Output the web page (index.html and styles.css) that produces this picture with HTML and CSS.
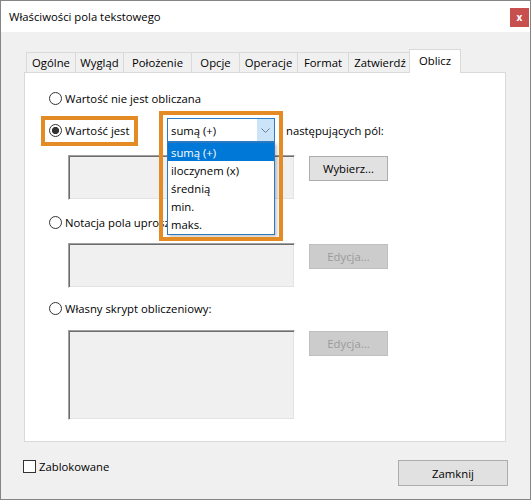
FILE: index.html
```html
<!DOCTYPE html>
<html lang="pl">
<head>
<meta charset="utf-8">
<title>Właściwości pola tekstowego</title>
<link rel="stylesheet" href="styles.css">
</head>
<body>
<div class="window">
  <div class="titlebar">
    <span class="title">Właściwości pola tekstowego</span>
    <span class="close">x</span>
  </div>
  <div class="client">
    <div class="tabs">
      <div class="tab t1">Ogólne</div>
      <div class="tab t2">Wygląd</div>
      <div class="tab t3">Położenie</div>
      <div class="tab t4">Opcje</div>
      <div class="tab t5">Operacje</div>
      <div class="tab t6">Format</div>
      <div class="tab t7">Zatwierdź</div>
      <div class="tab active">Oblicz</div>
    </div>
    <div class="panel">
      <div class="radio-row">
        <span class="radio"></span><span class="label">Wartość nie jest obliczana</span>
      </div>
      <div class="calc-row">
        <div class="calc-label"><span class="radio checked"></span><span class="label">Wartość jest</span></div>
        <div class="combo">
          <span class="combo-text">sumą (+)</span>
          <span class="combo-arrow"><svg width="9" height="5" viewBox="0 0 9 5"><polyline points="0.5,0.5 4.5,4.5 8.5,0.5" fill="none" stroke="#6a7f93" stroke-width="1"/></svg></span>
          <ul class="dropdown">
            <li class="selected">sumą (+)</li>
            <li>iloczynem (x)</li>
            <li>średnią</li>
            <li>min.</li>
            <li>maks.</li>
          </ul>
        </div>
        <span class="fields-label">następujących pól:</span>
      </div>
      <div class="field-row">
        <div class="textbox"></div>
        <div class="btn">Wybierz...</div>
      </div>
      <div class="radio-row gap-top">
        <span class="radio"></span><span class="label">Notacja pola uproszczonego</span>
      </div>
      <div class="field-row small-gap">
        <div class="textbox"></div>
        <div class="btn disabled">Edycja...</div>
      </div>
      <div class="radio-row mid-gap">
        <span class="radio"></span><span class="label">Własny skrypt obliczeniowy:</span>
      </div>
      <div class="field-row">
        <div class="textbox tall"></div>
        <div class="btn disabled">Edycja...</div>
      </div>
    </div>
    <div class="footer">
      <div class="check-row"><span class="checkbox"></span><span class="label">Zablokowane</span></div>
      <div class="btn wide">Zamknij</div>
    </div>
  </div>
  <div class="highlight hl-radio"></div>
  <div class="highlight hl-combo"></div>
</div>
</body>
</html>
```

FILE: styles.css
```css
* { box-sizing: border-box; }

html, body {
  margin: 0;
  padding: 0;
  background: #ffffff;
}

body {
  font-family: "Open Sans", "Noto Sans", sans-serif;
  font-size: 11.3px;
  color: #000;
}

.window {
  position: relative;
  width: 531px;
  height: 500px;
  border: 1px solid #858585;
  display: flex;
  flex-direction: column;
  background: #f0f0f0;
}

.titlebar {
  height: 31px;
  background: #ffffff;
  display: flex;
  align-items: center;
  padding-left: 8px;
}

.title {
  white-space: nowrap;
}

.close {
  margin-left: auto;
  margin-right: 1px;
  align-self: flex-start;
  margin-top: 7px;
  width: 19px;
  height: 19px;
  background: #c7504f;
  color: #fff;
  font-weight: bold;
  font-size: 10px;
  display: flex;
  align-items: center;
  justify-content: center;
  line-height: 1;
  padding-bottom: 2px;
}

.client {
  flex: 1;
  padding-top: 17px;
  display: flex;
  flex-direction: column;
}

.tabs {
  display: flex;
  align-items: flex-end;
  height: 23px;
  padding-left: 25px;
}

.tab {
  height: 20px;
  border: 1px solid #d9d9d9;
  border-bottom: none;
  background: #f0f0f0;
  display: flex;
  align-items: center;
  justify-content: center;
  white-space: nowrap;
  margin-left: -1px;
  padding-bottom: 1px;
}

.t1 { width: 50px; margin-left: 0; }
.t2 { width: 49px; }
.t3 { width: 69px; }
.t4 { width: 49px; }
.t5 { width: 59px; }
.t6 { width: 52px; }
.t7 { width: 64px; }

.tab.active {
  width: 52px;
  height: 24px;
  margin-left: -3px;
  margin-bottom: -1px;
  background: #ffffff;
  position: relative;
  z-index: 2;
  padding-bottom: 2px;
}

.panel {
  position: relative;
  margin-left: 23px;
  width: 482px;
  background: #ffffff;
  border: 1px solid #d9d9d9;
  padding: 16px 0 21px 24px;
}

.radio-row {
  height: 18px;
  display: flex;
  align-items: center;
  white-space: nowrap;
}

.radio {
  flex: none;
  width: 13px;
  height: 13px;
  border: 1px solid #333333;
  border-radius: 50%;
  background: #ffffff;
  margin-right: 3px;
}

.radio.checked {
  background: radial-gradient(circle, #333333 0 3.3px, #ffffff 3.9px);
}

.calc-row {
  margin-top: 11px;
  height: 24px;
  display: flex;
  align-items: center;
  white-space: nowrap;
}

.calc-label {
  width: 118px;
  display: flex;
  align-items: center;
}

.combo {
  position: relative;
  width: 108px;
  height: 24px;
  border: 1px solid #2b7bc6;
  background: #ffffff;
  display: flex;
  align-items: stretch;
}

.combo-text {
  flex: 1;
  display: flex;
  align-items: center;
  padding-left: 3px;
}

.combo-arrow {
  width: 17px;
  background: #cce4f7;
  display: flex;
  align-items: center;
  justify-content: center;
}

.dropdown {
  position: absolute;
  z-index: 5;
  left: -1px;
  top: 23px;
  width: 108px;
  margin: 0;
  padding: 0 0 1px 0;
  list-style: none;
  background: #ffffff;
  border: 1px solid #2e78bd;
  box-shadow: 2px 2px 3px rgba(0, 0, 0, 0.22);
}

.dropdown li {
  height: 18px;
  display: flex;
  align-items: center;
  padding-left: 3px;
}

.dropdown li.selected {
  background: #0078d7;
  color: #ffffff;
}

.fields-label {
  margin-left: 11px;
}

.field-row {
  margin-top: 13px;
  margin-left: 19px;
  display: flex;
  align-items: flex-start;
}

.field-row.small-gap {
  margin-top: 12px;
}

.gap-top {
  margin-top: 13px;
}

.mid-gap {
  margin-top: 11px;
}

.textbox {
  width: 227px;
  height: 45px;
  background: #f0f0f0;
  border: 1px solid;
  border-color: #a0a0a0 #ffffff #ffffff #a0a0a0;
  box-shadow: inset 1px 1px 0 #6d6d6d, inset -1px -1px 0 #e3e3e3;
}

.textbox.tall {
  height: 90px;
}

.btn {
  margin-left: 14px;
  margin-top: 1px;
  width: 79px;
  height: 25px;
  background: #e1e1e1;
  border: 1px solid #adadad;
  display: flex;
  align-items: center;
  justify-content: center;
  white-space: nowrap;
}

.btn.disabled {
  background: #cccccc;
  border-color: #bfbfbf;
  color: #9a9a9a;
}

.footer {
  margin-top: 18px;
  padding: 0 22px;
  display: flex;
  justify-content: space-between;
  align-items: flex-start;
}

.check-row {
  display: flex;
  align-items: center;
  height: 13px;
  margin-top: 0;
}

.checkbox {
  width: 13px;
  height: 13px;
  border: 1px solid #333333;
  background: #ffffff;
  margin-right: 3px;
}

.btn.wide {
  margin: 0;
  width: 110px;
  height: 26px;
}

.highlight {
  position: absolute;
  z-index: 10;
  border: 4px solid #e58b25;
  pointer-events: none;
}

.hl-radio {
  left: 40px;
  top: 115px;
  width: 97px;
  height: 30px;
}

.hl-combo {
  left: 158px;
  top: 110px;
  width: 124px;
  height: 130px;
}
```
